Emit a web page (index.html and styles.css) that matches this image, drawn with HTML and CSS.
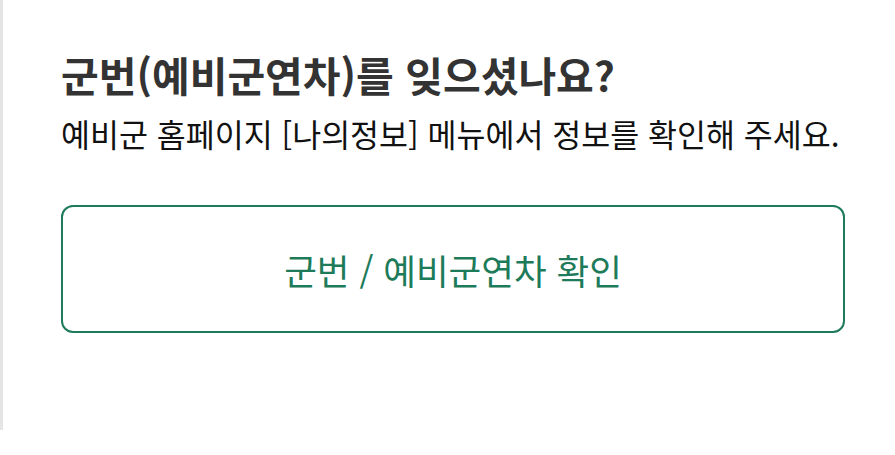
FILE: index.html
```html
<!DOCTYPE html>
<html lang="ko">
<head>
<meta charset="utf-8">
<link rel="stylesheet" href="styles.css">
</head>
<body>
<div class="panel">
  <h2 class="title">군번(예비군연차)를 잊으셨나요?</h2>
  <p class="desc">예비군 홈페이지 [나의정보] 메뉴에서 정보를 확인해 주세요.</p>
  <a class="btn">군번 / 예비군연차 확인</a>
</div>
</body>
</html>
```
FILE: styles.css
```css
html, body {
  margin: 0;
  padding: 0;
  background: #fff;
}
body {
  font-family: "Noto Sans CJK KR", "Noto Sans", sans-serif;
}
.panel {
  width: 834px;
  height: 430px;
  border-left: 3px solid #e5e5e5;
  padding: 0 0 0 58px;
  box-sizing: content-box;
  display: flex;
  flex-direction: column;
}
.title {
  margin: 50px 0 0;
  font-size: 41px;
  font-weight: 700;
  line-height: 49px;
  color: #333;
}
.desc {
  margin: 14px 0 0;
  font-size: 31.5px;
  line-height: 40px;
  color: #111;
}
.btn {
  margin-top: 52px;
  width: 784px;
  height: 128px;
  box-sizing: border-box;
  border: 2px solid #1e7b5a;
  border-radius: 12px;
  display: flex;
  align-items: center;
  justify-content: center;
  font-size: 35.5px;
  color: #1e7b5a;
}
```
